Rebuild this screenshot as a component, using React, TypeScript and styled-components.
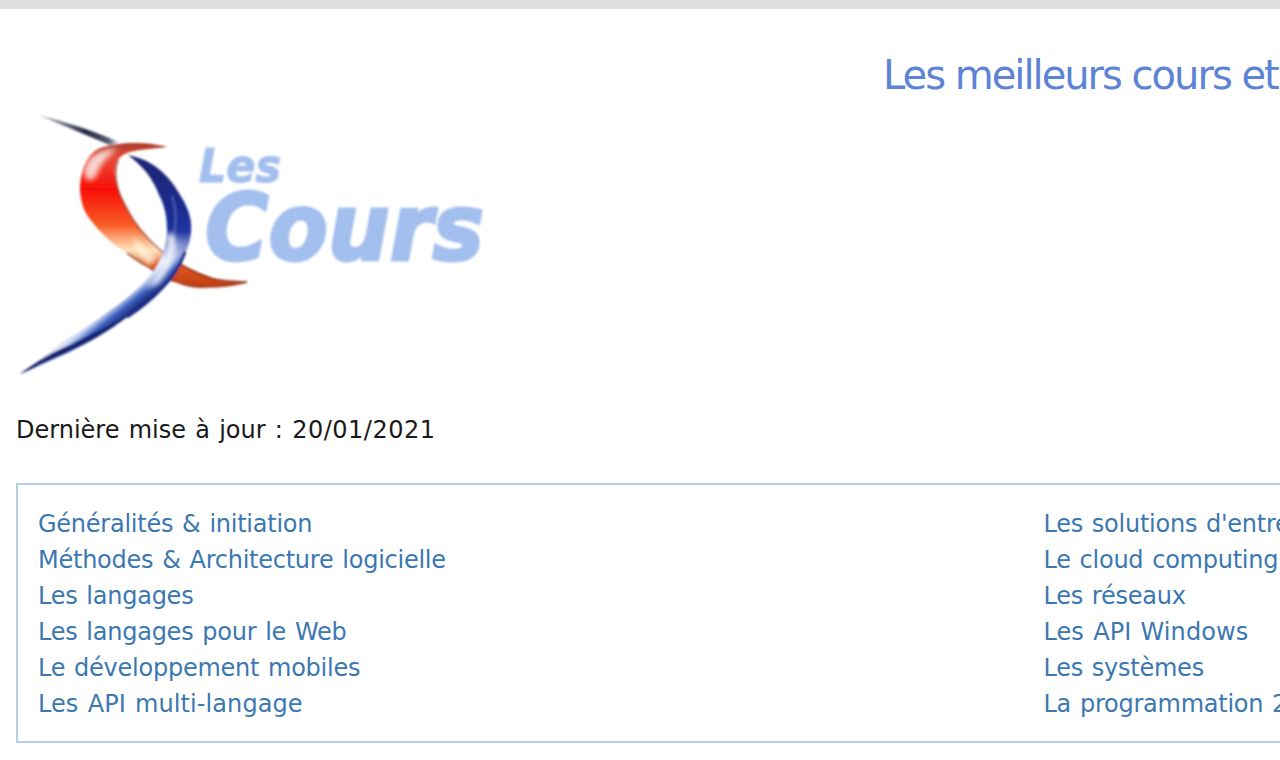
import styled, { createGlobalStyle } from 'styled-components';

type NavLink = { label: string; wide?: boolean };

const LEFT_LINKS: NavLink[] = [
  { label: 'Généralités & initiation' },
  { label: 'Méthodes & Architecture logicielle' },
  { label: 'Les langages' },
  { label: 'Les langages pour le Web' },
  { label: 'Le développement mobiles' },
  { label: 'Les API multi-langage', wide: true },
];

const RIGHT_LINKS: NavLink[] = [
  { label: "Les solutions d'entreprise" },
  { label: 'Le cloud computing' },
  { label: 'Les réseaux' },
  { label: 'Les API Windows', wide: true },
  { label: 'Les systèmes' },
  { label: 'La programmation 2D, 3D et Jeux' },
];

const GlobalStyle = createGlobalStyle`
  html, body {
    margin: 0;
    padding: 0;
    height: 760px;
    overflow: hidden;
    background: #fff;
  }
`;

const Page = styled.div`
  width: 2100px;
  font-family: 'DejaVu Sans', Verdana, sans-serif;
  font-size: 24px;
  color: #1a1a1a;
`;

const TopBar = styled.div`
  height: 9px;
  background: #e0e0e0;
`;

const Content = styled.main`
  padding: 0 16px;
`;

const Title = styled.h1`
  margin: 0;
  padding: 41px 0 0 867px;
  height: 62px;
  box-sizing: content-box;
  font-size: 40px;
  line-height: 50px;
  font-weight: 400;
  letter-spacing: -2px;
  color: #5c83d6;
  white-space: nowrap;
`;

const LogoBox = styled.div`
  height: 266px;
  svg {
    display: block;
  }
`;

const LogoText = styled.text`
  font-family: 'DejaVu Sans', sans-serif;
  font-weight: 700;
  font-style: italic;
  fill: #a3bfee;
  stroke: #a3bfee;
`;

const Updated = styled.p`
  margin: 0;
  padding-top: 34px;
  height: 71px;
  line-height: 36px;
  white-space: nowrap;
  word-spacing: 1.6px;
`;

const UpdatedDate = styled.span`
  letter-spacing: 0.5px;
`;

const LinkBox = styled.nav`
  display: grid;
  grid-template-columns: 1005.5px 1006px;
  width: 2064px;
  box-sizing: border-box;
  height: 260px;
  padding: 21px 20px;
  border: 2px solid #b3d0e6;
`;

const LinkList = styled.ul`
  margin: 0;
  padding: 0;
  list-style: none;
`;

const LinkItem = styled.li<{ $wide?: boolean }>`
  height: 36px;
  line-height: 36px;
  white-space: nowrap;
  word-spacing: 1.5px;
  letter-spacing: ${(p) => (p.$wide ? '0.08px' : '-0.25px')};
`;

const TextLink = styled.a`
  color: #3b78b1;
  text-decoration: none;
`;

const Logo = () => (
  <svg width="480" height="266" viewBox="16 112 480 266" aria-label="Les Cours">
    <defs>
      <linearGradient id="tail" x1="38" y1="115" x2="118" y2="144" gradientUnits="userSpaceOnUse">
        <stop offset="0" stopColor="#c8c8d4" />
        <stop offset="0.6" stopColor="#262a44" />
        <stop offset="0.88" stopColor="#555a72" />
        <stop offset="1" stopColor="#e0e0e8" />
      </linearGradient>
      <linearGradient id="red" x1="0" y1="143" x2="0" y2="288" gradientUnits="userSpaceOnUse">
        <stop offset="0" stopColor="#a83a28" />
        <stop offset="0.1" stopColor="#e84a38" />
        <stop offset="0.32" stopColor="#f80f06" />
        <stop offset="0.56" stopColor="#f85a24" />
        <stop offset="0.74" stopColor="#ffe4bc" />
        <stop offset="0.84" stopColor="#e05a20" />
        <stop offset="1" stopColor="#c03c14" />
      </linearGradient>
      <linearGradient id="blue" x1="0" y1="155" x2="0" y2="300" gradientUnits="userSpaceOnUse">
        <stop offset="0" stopColor="#1a2570" />
        <stop offset="0.45" stopColor="#1c2e98" />
        <stop offset="0.62" stopColor="#2840ac" />
        <stop offset="1" stopColor="#1c2c88" />
      </linearGradient>
      <linearGradient id="blueFade" x1="108" y1="300" x2="124" y2="320" gradientUnits="userSpaceOnUse">
        <stop offset="0" stopColor="#fff" />
        <stop offset="0.32" stopColor="#d4e0f6" />
        <stop offset="0.62" stopColor="#3d62c0" />
        <stop offset="1" stopColor="#16226e" />
      </linearGradient>
      <linearGradient id="fadeIn" x1="0" y1="232" x2="0" y2="262" gradientUnits="userSpaceOnUse">
        <stop offset="0" stopColor="#000" />
        <stop offset="1" stopColor="#fff" />
      </linearGradient>
      <mask id="lowerBand" maskUnits="userSpaceOnUse" x="0" y="100" width="300" height="290">
        <rect x="0" y="100" width="300" height="290" fill="url(#fadeIn)" />
      </mask>
      <filter id="soft" x="-5%" y="-5%" width="110%" height="110%">
        <feGaussianBlur stdDeviation="0.8" />
      </filter>
      <filter id="softer" x="-30%" y="-30%" width="160%" height="160%">
        <feGaussianBlur stdDeviation="2.4" />
      </filter>
    </defs>
    <g filter="url(#soft)">
      <path d="M38 115 Q80 125 119 142 L112 146 Q72 129 38 115Z" fill="url(#tail)" />
      <path
        d="M167 147 C150 142 120 141 100 148 C86 154 80 172 80 190 C81 205 85 214 93 223 C103 236 114 245 127 253 C136 260 143 264 150 268 C160 277 168 280 177 282 C186 286 196 288 207 287 C222 287 236 285 247 282 C236 282 224 281 213 278 C204 275 196 271 187 267 C177 261 166 254 157 247 C148 238 140 229 133 220 C126 209 120 198 117 187 C115 179 114 173 115 167 C116 161 119 158 123 155 C128 152 134 151 140 150 C150 149 158 148 167 147Z"
        fill="url(#red)"
      />
      <path
        d="M118 160 C113 172 116 190 125 205 C133 222 146 238 160 250 C172 260 190 272 213 279 C224 281 236 282 247 282"
        fill="none"
        stroke="#7c2c1c"
        strokeWidth="1.6"
        opacity="0.8"
      />
      <path
        d="M127 253 C136 260 143 264 150 268 C160 277 168 280 177 282 C186 286 196 288 207 287 C222 287 236 285 247 282"
        fill="none"
        stroke="#8c2a18"
        strokeWidth="1.6"
        opacity="0.8"
      />
      <path d="M84 172 C86 156 100 150 118 148 C108 156 100 164 96 176 C92 182 86 182 84 172Z" fill="#fbeeea" opacity="0.85" filter="url(#softer)" />
      <path d="M133 236 C140 244 148 252 156 256 L150 266 C142 260 134 250 133 236Z" fill="#fff6dc" opacity="0.8" filter="url(#softer)" />
      <path
        d="M128 155 C136 157 143 159 150 163 C162 170 171 180 177 190 C185 202 190 212 191 223 C192 236 189 247 183 257 C178 268 171 278 163 287 C153 298 141 308 127 317 C110 330 88 343 67 353 C50 361 34 368 20 374 C34 365 50 352 67 340 C82 331 95 322 107 313 C119 305 130 296 140 287 C149 279 155 270 160 260 C165 250 167 240 167 230 C167 218 165 207 160 197 C156 187 152 180 147 173 C141 166 135 160 128 155Z"
        fill="url(#blue)"
      />
      <path d="M172 196 C176 208 177 220 174 234" fill="none" stroke="#6b82cf" strokeWidth="1.4" opacity="0.7" />
      <path
        d="M167 232 L191 232 C192 240 189 247 183 257 C178 268 171 278 163 287 C153 298 141 308 127 317 C110 330 88 343 67 353 C50 361 34 368 20 374 C34 365 50 352 67 340 C82 331 95 322 107 313 C119 305 130 296 140 287 C149 279 155 270 160 260 C165 250 167 240 167 232Z"
        fill="url(#blueFade)"
        mask="url(#lowerBand)"
      />
      <path d="M166 234 C172 250 164 268 146 288 L158 284 C172 268 178 250 174 234Z" fill="#eef3fc" opacity="0.95" filter="url(#softer)" />
      <path d="M127 316 C110 329 88 342 67 352 C50 360 34 368 20 374 C36 362 52 352 70 345 C90 335 110 325 127 316Z" fill="#18246e" />
      <path d="M185 252 C180 266 172 278 163 287 C153 298 141 308 127 317" fill="none" stroke="#1c2c88" strokeWidth="3" />
    </g>
    <g filter="url(#soft)">
      <LogoText x="199" y="182" fontSize="47" strokeWidth="1.2" textLength="82" lengthAdjust="spacingAndGlyphs">
        Les
      </LogoText>
      <LogoText x="205" y="260" fontSize="93" strokeWidth="3" textLength="279" lengthAdjust="spacingAndGlyphs">
        Cours
      </LogoText>
    </g>
  </svg>
);

const App = () => (
  <Page>
    <GlobalStyle />
    <TopBar />
    <Content>
      <Title>Les meilleurs cours et tutoriels pour apprendre la programmation</Title>
      <LogoBox>
        <Logo />
      </LogoBox>
      <Updated>
        Dernière mise à jour : <UpdatedDate>20/01/2021</UpdatedDate>
      </Updated>
      <LinkBox>
        {[LEFT_LINKS, RIGHT_LINKS].map((links) => (
          <LinkList key={links[0].label}>
            {links.map((link) => (
              <LinkItem key={link.label} $wide={link.wide}>
                <TextLink href="#">{link.label}</TextLink>
              </LinkItem>
            ))}
          </LinkList>
        ))}
      </LinkBox>
    </Content>
  </Page>
);

export default App;
